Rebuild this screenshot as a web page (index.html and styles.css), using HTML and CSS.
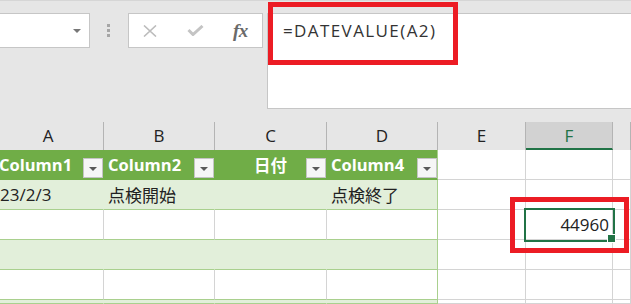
FILE: index.html
```html
<!DOCTYPE html>
<html lang="ja">
<head>
    <meta charset="utf-8">
    <title>DATEVALUE</title>
    <link rel="stylesheet" href="styles.css">
</head>
<body>
<div id="toolbar">
    <div class="namebox"><span class="drop"></span></div>
    <div class="grip"><i></i><i></i><i></i></div>
    <div class="fbuttons">
        <svg class="cancel" width="14" height="12" viewBox="0 0 14 12"><path d="M1 0.5L13 11.5M13 0.5L1 11.5" stroke="#bcbcbc" stroke-width="1.6" fill="none"/></svg>
        <svg class="enter" width="17" height="11" viewBox="0 0 17 11"><path d="M1.5 5L6 9.5L15.5 1" stroke="#c4c4c4" stroke-width="3" fill="none"/></svg>
        <span class="fx">fx</span>
    </div>
    <div class="formula">=DATEVALUE(A2)</div>
</div>

<div id="sheet">
    <div class="ch">A</div>
    <div class="ch">B</div>
    <div class="ch">C</div>
    <div class="ch">D</div>
    <div class="ch">E</div>
    <div class="ch active">F</div>
    <div class="ch"></div>

    <div class="th first"><span>Column1</span><b class="filter"></b></div>
    <div class="th"><span>Column2</span><b class="filter"></b></div>
    <div class="th mid"><span>日付</span><b class="filter"></b></div>
    <div class="th last"><span>Column4</span><b class="filter"></b></div>
    <div class="c"></div>
    <div class="c"></div>
    <div class="c"></div>

    <div class="td band first">23/2/3</div>
    <div class="td band">点検開始</div>
    <div class="td band"></div>
    <div class="td band last">点検終了</div>
    <div class="c"></div>
    <div class="c"></div>
    <div class="c"></div>

    <div class="td first"></div>
    <div class="td"></div>
    <div class="td"></div>
    <div class="td last"></div>
    <div class="c"></div>
    <div class="c sel">44960</div>
    <div class="c"></div>

    <div class="td band first"></div>
    <div class="td band"></div>
    <div class="td band"></div>
    <div class="td band last"></div>
    <div class="c"></div>
    <div class="c"></div>
    <div class="c"></div>

    <div class="td first"></div>
    <div class="td"></div>
    <div class="td"></div>
    <div class="td last"></div>
    <div class="c"></div>
    <div class="c"></div>
    <div class="c"></div>

    <div class="td band first"></div>
    <div class="td band"></div>
    <div class="td band"></div>
    <div class="td band last"></div>
    <div class="c"></div>
    <div class="c"></div>
    <div class="c"></div>
</div>

<!-- red annotation frames -->
<div class="mark mark-formula"></div>
<div class="mark mark-cell"></div>
</body>
</html>
```

FILE: styles.css
```css
* {
    box-sizing: border-box;
}
html, body {
    margin: 0;
    height: 304px;
    overflow: hidden;
}
body {
    position: relative;
    background: #e6e6e6;
    font-family: "Open Sans", "Noto Sans CJK JP", sans-serif;
    color: #222;
}

/* formula bar area */
#toolbar {
    display: flex;
    align-items: flex-start;
    height: 120px;
    padding-top: 12px;
    border-top: 1px solid #d6d6d6;
}
.namebox {
    display: flex;
    align-items: center;
    justify-content: flex-end;
    width: 90px;
    height: 35px;
    padding-right: 8px;
    background: #fff;
    border: 1px solid #c6c6c6;
    border-left: none;
}
.drop {
    width: 0;
    height: 0;
    border-left: 4px solid transparent;
    border-right: 4px solid transparent;
    border-top: 4px solid #777;
}
.grip {
    display: flex;
    flex-direction: column;
    gap: 2px;
    margin: 11px 0 0 17px;
}
.grip i {
    width: 3px;
    height: 3px;
    background: #a6a6a6;
}
.fbuttons {
    display: flex;
    align-items: center;
    width: 135px;
    height: 35px;
    margin-left: 18px;
    padding-left: 14px;
    background: #fff;
    border: 1px solid #c6c6c6;
}
.enter {
    margin-left: 30px;
}
.fx {
    margin-left: 29px;
    font-family: "Liberation Serif", serif;
    font-style: italic;
    font-weight: 700;
    font-size: 19px;
    color: #6a6a6a;
    letter-spacing: -0.5px;
}
.formula {
    flex: 1;
    height: 96px;
    margin-left: 4px;
    padding: 5px 0 0 15px;
    background: #fff;
    border: 1px solid #c6c6c6;
    border-right: none;
    font-size: 17px;
    line-height: 24px;
    letter-spacing: 1.4px;
    color: #333;
}

/* worksheet */
#sheet {
    display: grid;
    grid-template-columns: 111px 111px 112px 111px 88px 87px 1fr;
    grid-template-rows: repeat(6, 30px) 4px;
    margin-left: -7px;
    font-size: 17px;
}
.ch {
    margin-top: 2px;
    border-right: 1px solid #b4b4b4;
    text-align: center;
    font-size: 17px;
    line-height: 28px;
}
.ch.active {
    background: #d2d2d2;
    border-bottom: 2px solid #217346;
    color: #217346;
}
.th {
    display: flex;
    align-items: center;
    padding-left: 4px;
    background: #70ad47;
    border-right: 1px solid #70ad47;
    border-bottom: 1px solid #70ad47;
    color: #fff;
    font-weight: 700;
    font-size: 16.5px;
}
.th.first {
    padding-left: 6px;
}
.th span {
    flex: 1;
}
.th.mid {
    padding-left: 20px;
}
.th.mid span {
    text-align: center;
}
.th.last {
    border-right-color: #a9d08e;
}
.filter {
    align-self: flex-end;
    position: relative;
    width: 20px;
    height: 20px;
    margin-bottom: 1px;
    background: #f6f6f6;
    border: 1px solid #c4c4c4;
}
.filter::after {
    content: "";
    position: absolute;
    left: 5px;
    top: 8px;
    border-left: 4px solid transparent;
    border-right: 4px solid transparent;
    border-top: 4px solid #595959;
}
.td {
    display: flex;
    align-items: center;
    padding-left: 4px;
    background: #fff;
    border-right: 1px solid #d4d4d4;
    border-bottom: 1px solid #a9d08e;
}
.td.first {
    padding-left: 7px;
}
.td.band {
    background: #e2efda;
    border-right-color: #e2efda;
}
.td.last {
    border-right-color: #a9d08e;
}
.c {
    display: flex;
    align-items: center;
    justify-content: flex-end;
    padding-right: 3px;
    background: #fff;
    border-right: 1px solid #d4d4d4;
    border-bottom: 1px solid #d4d4d4;
}
.c.sel {
    position: relative;
    z-index: 1;
    outline: 2px solid #217346;
}
.c.sel::after {
    content: "";
    position: absolute;
    right: -4px;
    bottom: -4px;
    width: 7px;
    height: 7px;
    background: #217346;
    border: 1px solid #fff;
}

.mark {
    position: absolute;
    z-index: 5;
    border: 5px solid #ec1c24;
}
.mark-formula {
    left: 268px;
    top: 2px;
    width: 190px;
    height: 63px;
}
.mark-cell {
    left: 510px;
    top: 197px;
    width: 119px;
    height: 56px;
}
```
